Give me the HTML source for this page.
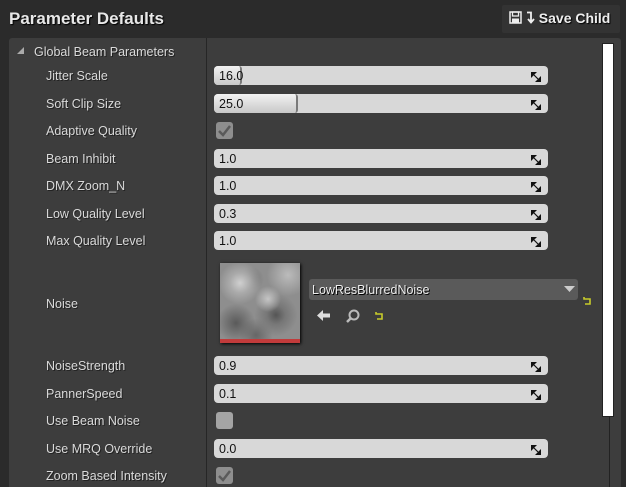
<!DOCTYPE html>
<html><head><style>
*{box-sizing:border-box;margin:0;padding:0}
html,body{width:626px;height:487px;overflow:hidden}
body{background:#2b2b2b;font-family:"Liberation Sans",sans-serif;position:relative;color:#dcdcdc}
.title{position:absolute;left:9px;top:9px;font-size:17px;font-weight:bold;color:#e8e8e8;text-shadow:1px 1px 1px #000}
.btn{position:absolute;left:502px;top:5px;width:118px;height:28px;background:#333;border-radius:2px;font-size:14px;font-weight:bold;color:#eee;padding:5px 0 0 7px;text-shadow:1px 1px 1px #000}
.panel{position:absolute;left:9px;top:38px;width:612px;height:460px;background:#3d3d3d;border-radius:3px}
.div{position:absolute;left:206px;top:38px;width:1px;height:460px;background:#262626}
.lbl{position:absolute;left:46px;font-size:12.5px;color:#dadada;text-shadow:1px 1px 0 #222}
.inp{position:absolute;left:214px;width:334px;height:19px;background:#d8d8d8;border-radius:4px;font-size:12.5px;color:#111;padding:3px 0 0 5px}
.inp i{position:absolute;right:7px;top:5px;width:10px;height:10px}
.cb{position:absolute;left:216px;width:17px;height:17px;background:#9c9c9c;border-radius:3px}
.scroll{position:absolute;left:602px;top:43px;width:12px;height:374px;background:#fff;border:1px solid #222}
</style></head><body>
<div class="title">Parameter Defaults</div>
<div class="btn"><svg width="13" height="13" viewBox="0 0 13 13" style="vertical-align:-1px"><rect x="1" y="1" width="11" height="11" fill="none" stroke="#eee" stroke-width="1.5"/><rect x="3.5" y="1" width="6" height="4" fill="none" stroke="#eee" stroke-width="1.3"/><rect x="3" y="7.5" width="7" height="4.5" fill="#eee"/></svg> <svg width="9" height="13" viewBox="0 0 9 13" style="vertical-align:-1px"><path d="M1 1.5H5V11M2 8L5 11.5L8 8" fill="none" stroke="#eee" stroke-width="1.8"/></svg> Save Child</div>
<div class="panel"></div>
<div class="div"></div>
<div class="scroll"></div>
<div style="position:absolute;left:609px;top:417px;width:1px;height:70px;background:#222"></div>
<svg style="position:absolute;left:17px;top:47px" width="8" height="8"><path d="M7 0V7H0Z" fill="#aaa"/></svg>
<div class="lbl" style="left:34px;top:45px">Global Beam Parameters</div>

<div class="lbl" style="top:69px">Jitter Scale</div>
<div class="inp" style="top:66px"><span style="position:absolute;left:0;top:0;width:28px;height:19px;background:linear-gradient(#f2f2f2,#c8c8c8);border-right:2px solid #7a7a7a;border-radius:4px 3px 3px 4px"></span><span style="position:relative">16.0</span><i><svg width="10" height="10"><path d="M0 0H6L4 2L0 6ZM10 10H4L6 8L10 4Z" fill="#111"/><path d="M3 3L7 7" stroke="#111" stroke-width="1.2"/></svg></i></div>
<div class="lbl" style="top:97px">Soft Clip Size</div>
<div class="inp" style="top:94px"><span style="position:absolute;left:0;top:0;width:84px;height:19px;background:linear-gradient(#f2f2f2,#c8c8c8);border-right:2px solid #7a7a7a;border-radius:4px 3px 3px 4px"></span><span style="position:relative">25.0</span><i><svg width="10" height="10"><path d="M0 0H6L4 2L0 6ZM10 10H4L6 8L10 4Z" fill="#111"/><path d="M3 3L7 7" stroke="#111" stroke-width="1.2"/></svg></i></div>
<div class="lbl" style="top:124px">Adaptive Quality</div>
<div class="cb" style="top:122px;background:#8e8e8e"><svg width="17" height="17"><path d="M3 9L7 13L14 4" fill="none" stroke="#5a5a5a" stroke-width="2.5"/></svg></div>
<div class="lbl" style="top:152px">Beam Inhibit</div>
<div class="inp" style="top:149px">1.0<i><svg width="10" height="10"><path d="M0 0H6L4 2L0 6ZM10 10H4L6 8L10 4Z" fill="#111"/><path d="M3 3L7 7" stroke="#111" stroke-width="1.2"/></svg></i></div>
<div class="lbl" style="top:179px">DMX Zoom_N</div>
<div class="inp" style="top:176px">1.0<i><svg width="10" height="10"><path d="M0 0H6L4 2L0 6ZM10 10H4L6 8L10 4Z" fill="#111"/><path d="M3 3L7 7" stroke="#111" stroke-width="1.2"/></svg></i></div>
<div class="lbl" style="top:207px">Low Quality Level</div>
<div class="inp" style="top:204px">0.3<i><svg width="10" height="10"><path d="M0 0H6L4 2L0 6ZM10 10H4L6 8L10 4Z" fill="#111"/><path d="M3 3L7 7" stroke="#111" stroke-width="1.2"/></svg></i></div>
<div class="lbl" style="top:234px">Max Quality Level</div>
<div class="inp" style="top:231px">1.0<i><svg width="10" height="10"><path d="M0 0H6L4 2L0 6ZM10 10H4L6 8L10 4Z" fill="#111"/><path d="M3 3L7 7" stroke="#111" stroke-width="1.2"/></svg></i></div>

<div class="lbl" style="top:297px">Noise</div>
<div style="position:absolute;left:220px;top:263px;width:80px;height:80px;background:radial-gradient(circle at 25% 25%,#d0d0d0 0,#aaa 12%,transparent 25%),radial-gradient(circle at 60% 45%,#c5c5c5,transparent 20%),radial-gradient(circle at 70% 65%,#555 0,#777 12%,transparent 28%),radial-gradient(circle at 20% 75%,#5a5a5a,transparent 22%),radial-gradient(circle at 85% 15%,#bbb,transparent 22%),radial-gradient(circle at 45% 90%,#666,transparent 20%),radial-gradient(circle at 40% 20%,#777,transparent 15%),#8e8e8e;box-shadow:1px 1px 3px #000"></div>
<div style="position:absolute;left:220px;top:339px;width:80px;height:4px;background:#c23b3b"></div>
<div style="position:absolute;left:309px;top:279px;width:269px;height:21px;background:#5a5a5a;border-radius:3px;font-size:12.5px;color:#eee;padding:4px 0 0 3px;text-shadow:1px 1px 0 #000">LowResBlurredNoise<svg style="position:absolute;right:3px;top:7px" width="11" height="6"><path d="M0 0H11L5.5 6Z" fill="#ccc"/></svg></div>
<svg style="position:absolute;left:582px;top:296px" width="10" height="9"><path d="M2 1V3H8V8H3" fill="none" stroke="#c8cc2a" stroke-width="1.6"/></svg>
<svg style="position:absolute;left:316px;top:308px" width="15" height="15"><path d="M1 7.5L7 2V5.5H14V9.5H7V13Z" fill="#ddd"/></svg>
<svg style="position:absolute;left:345px;top:308px" width="16" height="16"><circle cx="9" cy="7" r="4.5" fill="none" stroke="#bbb" stroke-width="2"/><path d="M6 10L2 14" stroke="#bbb" stroke-width="2.5"/></svg>
<svg style="position:absolute;left:374px;top:311px" width="10" height="9"><path d="M2 1V3H8V8H3" fill="none" stroke="#c8cc2a" stroke-width="1.6"/></svg>

<div class="lbl" style="top:359px">NoiseStrength</div>
<div class="inp" style="top:356px">0.9<i><svg width="10" height="10"><path d="M0 0H6L4 2L0 6ZM10 10H4L6 8L10 4Z" fill="#111"/><path d="M3 3L7 7" stroke="#111" stroke-width="1.2"/></svg></i></div>
<div class="lbl" style="top:387px">PannerSpeed</div>
<div class="inp" style="top:384px">0.1<i><svg width="10" height="10"><path d="M0 0H6L4 2L0 6ZM10 10H4L6 8L10 4Z" fill="#111"/><path d="M3 3L7 7" stroke="#111" stroke-width="1.2"/></svg></i></div>
<div class="lbl" style="top:414px">Use Beam Noise</div>
<div class="cb" style="top:412px;background:#a4a4a4"></div>
<div class="lbl" style="top:442px">Use MRQ Override</div>
<div class="inp" style="top:439px">0.0<i><svg width="10" height="10"><path d="M0 0H6L4 2L0 6ZM10 10H4L6 8L10 4Z" fill="#111"/><path d="M3 3L7 7" stroke="#111" stroke-width="1.2"/></svg></i></div>
<div class="lbl" style="top:469px">Zoom Based Intensity</div>
<div class="cb" style="top:467px;background:#8e8e8e"><svg width="17" height="17"><path d="M3 9L7 13L14 4" fill="none" stroke="#5a5a5a" stroke-width="2.5"/></svg></div>
</body></html>
